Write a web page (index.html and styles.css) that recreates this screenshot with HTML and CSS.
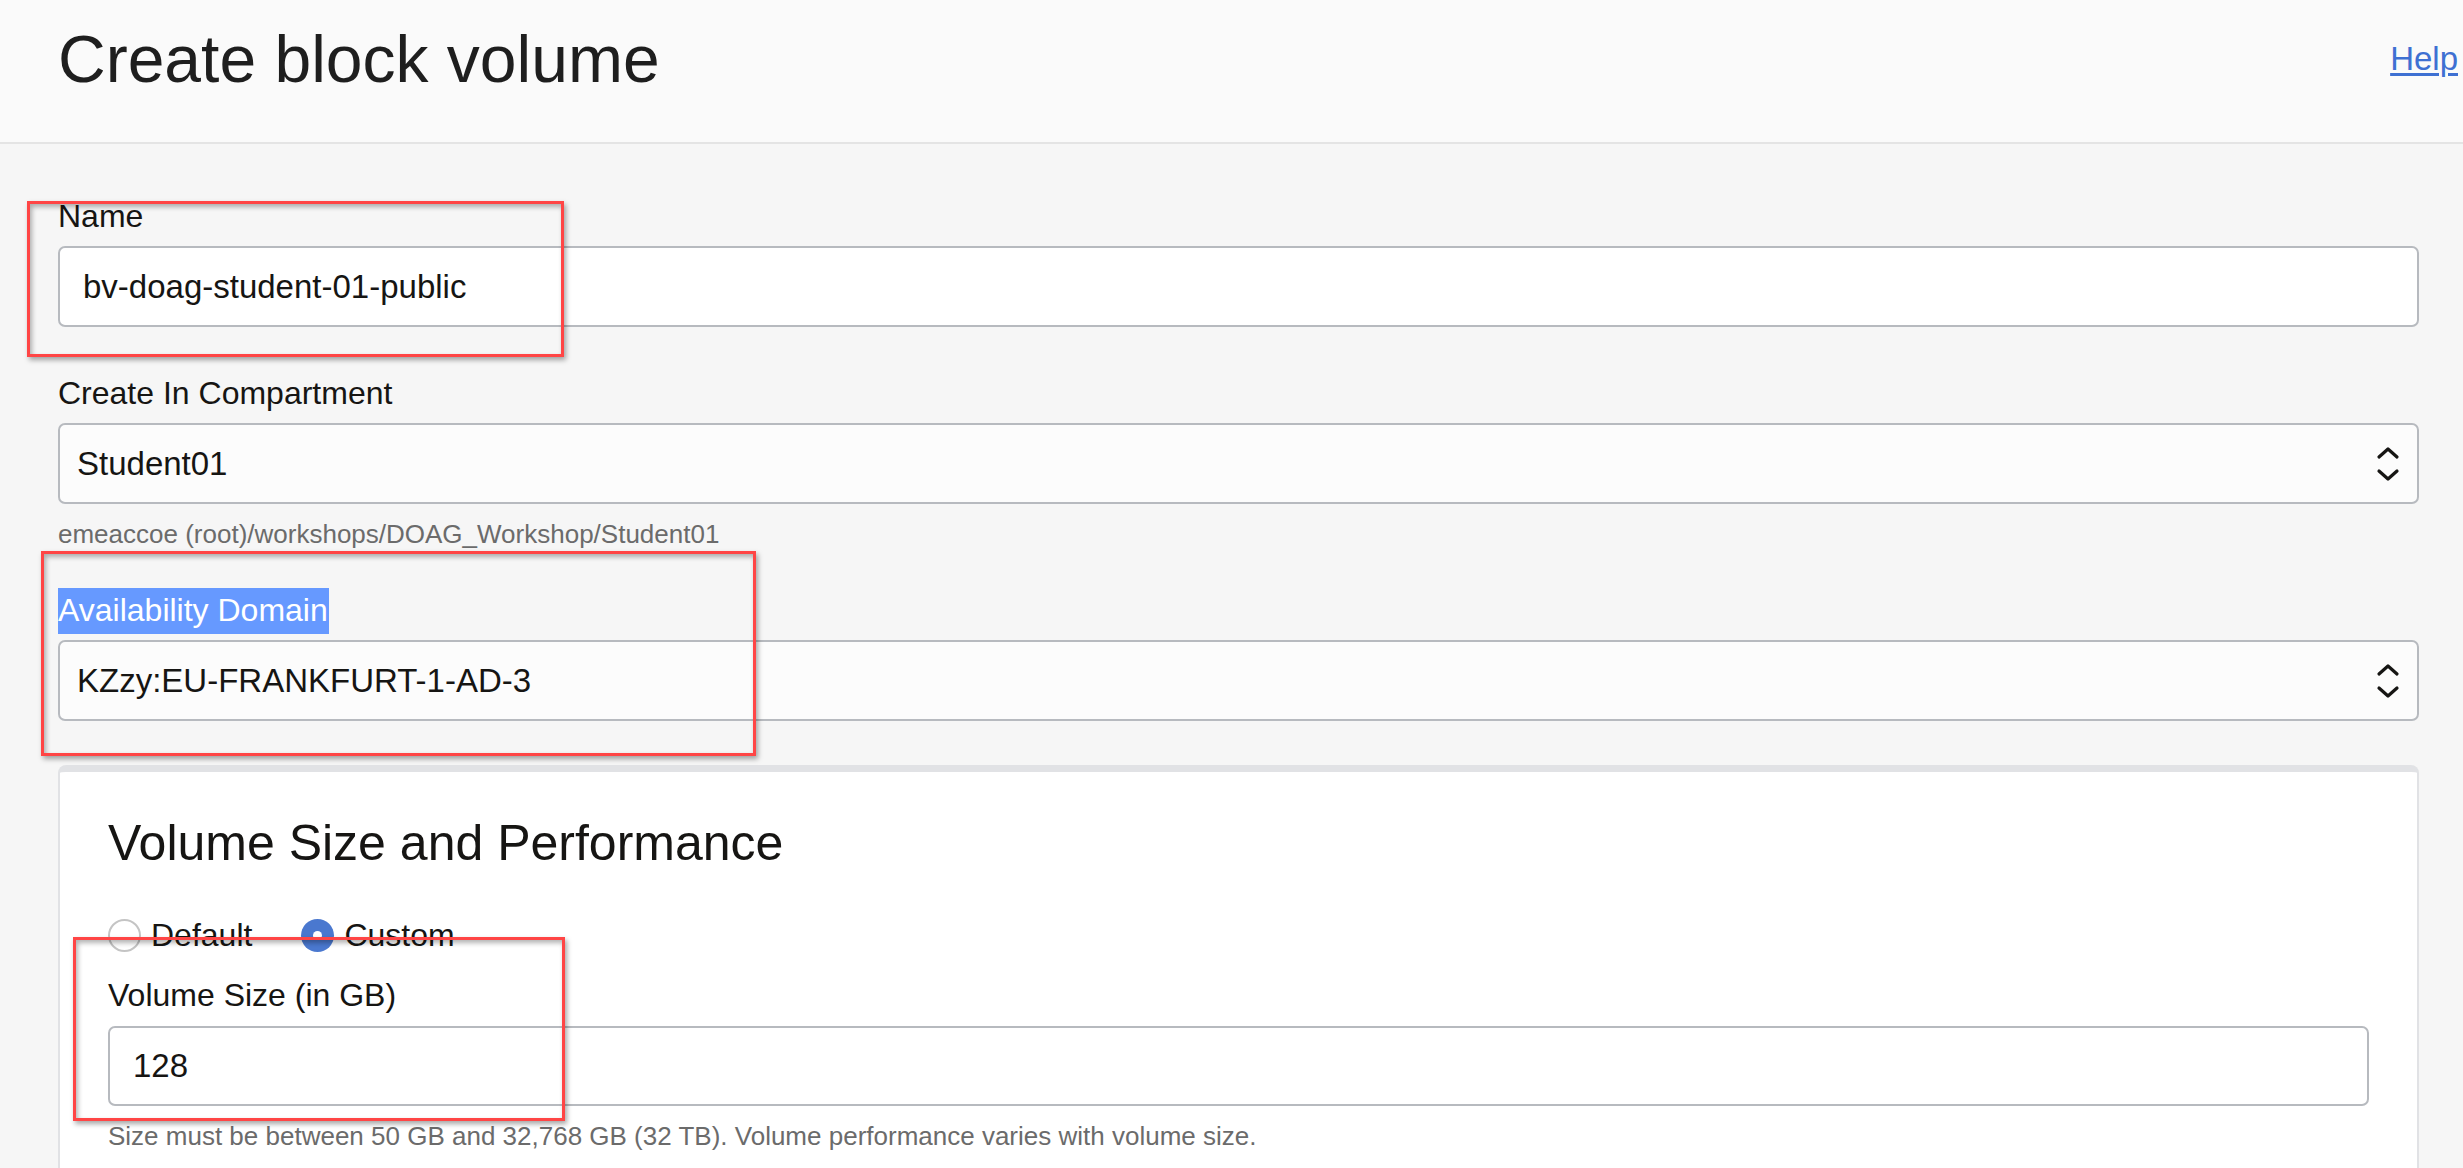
FILE: index.html
```html
<!DOCTYPE html>
<html lang="en">
<head>
<meta charset="utf-8">
<title>Create block volume</title>
<link rel="stylesheet" href="styles.css">
</head>
<body>
<header class="page-header">
  <h1 class="page-title">Create block volume</h1>
  <a class="help-link" href="#">Help</a>
</header>

<main class="form">
  <div class="field">
    <label class="field-label">Name</label>
    <div class="text-input">bv-doag-student-01-public</div>
  </div>

  <div class="field field-compartment">
    <label class="field-label">Create In Compartment</label>
    <div class="select-input">
      <span>Student01</span>
      <svg class="chevrons" width="24" height="38" viewBox="0 0 24 38" aria-hidden="true">
        <polyline points="3,12 12,4 21,12" fill="none" stroke="#161513" stroke-width="3.2" stroke-linecap="round" stroke-linejoin="round"/>
        <polyline points="3,26 12,34 21,26" fill="none" stroke="#161513" stroke-width="3.2" stroke-linecap="round" stroke-linejoin="round"/>
      </svg>
    </div>
    <div class="help-text">emeaccoe (root)/workshops/DOAG_Workshop/Student01</div>
  </div>

  <div class="field field-ad">
    <label class="field-label"><span class="selected">Availability Domain</span></label>
    <div class="select-input">
      <span>KZzy:EU-FRANKFURT-1-AD-3</span>
      <svg class="chevrons" width="24" height="38" viewBox="0 0 24 38" aria-hidden="true">
        <polyline points="3,12 12,4 21,12" fill="none" stroke="#161513" stroke-width="3.2" stroke-linecap="round" stroke-linejoin="round"/>
        <polyline points="3,26 12,34 21,26" fill="none" stroke="#161513" stroke-width="3.2" stroke-linecap="round" stroke-linejoin="round"/>
      </svg>
    </div>
  </div>

  <section class="card">
    <h2 class="card-title">Volume Size and Performance</h2>
    <div class="radio-row">
      <label class="radio"><span class="radio-dot"></span>Default</label>
      <label class="radio"><span class="radio-dot checked"></span>Custom</label>
    </div>
    <div class="field field-size">
      <label class="field-label">Volume Size (in GB)</label>
      <div class="text-input">128</div>
      <div class="help-text">Size must be between 50 GB and 32,768 GB (32 TB). Volume performance varies with volume size.</div>
    </div>
  </section>
</main>

<div class="annot annot-1"></div>
<div class="annot annot-2"></div>
<div class="annot annot-3"></div>
</body>
</html>
```

FILE: styles.css
```css
html, body {
  margin: 0;
  padding: 0;
}

body {
  background: #f6f6f6;
  font-family: "Liberation Sans", Arial, Helvetica, sans-serif;
  color: #161513;
  overflow: hidden;
  height: 1168px;
}

.page-header {
  box-sizing: border-box;
  height: 144px;
  background: #fafafa;
  border-bottom: 2px solid #e4e4e4;
  display: flex;
  justify-content: space-between;
  align-items: flex-start;
  padding: 26px 5px 0 58px;
}

.page-title {
  margin: 0;
  font-size: 66px;
  line-height: 66px;
  font-weight: normal;
  color: #1e1e1e;
}

.help-link {
  margin-top: 16px;
  font-size: 33px;
  line-height: 33px;
  color: #3e70d2;
  text-decoration: underline;
  text-underline-offset: 3px;
}

.form {
  padding: 56px 44px 0 58px;
}

.field-label {
  display: block;
  font-size: 32px;
  line-height: 32px;
  height: 32px;
  margin-bottom: 14px;
  color: #161513;
}

.text-input,
.select-input {
  box-sizing: border-box;
  height: 81px;
  border: 2px solid #b7babf;
  border-radius: 7px;
  background: #ffffff;
  font-size: 33px;
  display: flex;
  align-items: center;
  padding-left: 23px;
  color: #161513;
}

.select-input {
  background: #fcfcfc;
  padding-left: 17px;
  padding-right: 17px;
  justify-content: space-between;
}

.chevrons {
  display: block;
}

.field-compartment {
  margin-top: 50px;
}

.help-text {
  font-size: 26px;
  line-height: 26px;
  color: #6b6b6b;
  margin-top: 17px;
}

.field-ad {
  margin-top: 47px;
}

.selected {
  background: #6699ff;
  color: #ffffff;
  padding: 4px 1px 6px 0;
}

.card {
  margin-top: 44px;
  background: #ffffff;
  border-top: 7px solid #e1e2e5;
  border-left: 2px solid #e1e2e5;
  border-right: 2px solid #e1e2e5;
  border-radius: 8px 8px 0 0;
  padding: 46px 48px 60px 48px;
}

.card-title {
  margin: 0;
  font-size: 50px;
  line-height: 50px;
  font-weight: normal;
  color: #161513;
}

.radio-row {
  margin-top: 50px;
  display: flex;
  align-items: center;
  gap: 49px;
  height: 34px;
}

.radio {
  display: flex;
  align-items: center;
  gap: 10px;
  font-size: 32px;
  line-height: 32px;
  color: #161513;
}

.radio-dot {
  box-sizing: border-box;
  width: 33px;
  height: 33px;
  border-radius: 50%;
  border: 2px solid #c4c4c4;
  background: #ffffff;
  position: relative;
}

.radio-dot.checked {
  border: none;
  background: #4a78cf;
}

.radio-dot.checked::after {
  content: "";
  position: absolute;
  left: 12px;
  top: 12px;
  width: 9px;
  height: 9px;
  border-radius: 50%;
  background: #ffffff;
}

.field-size {
  margin-top: 27px;
}

.field-size .field-label {
  margin-bottom: 15px;
}

.field-size .text-input {
  height: 80px;
}

/* annotation overlays (red highlight boxes drawn over the screenshot) */
.annot {
  position: absolute;
  box-sizing: border-box;
  border: 3px solid #ff4545;
  box-shadow: 2px 3px 5px rgba(0, 0, 0, 0.35), inset 2px 3px 5px rgba(0, 0, 0, 0.3);
  pointer-events: none;
}

.annot-1 {
  left: 27px;
  top: 201px;
  width: 537px;
  height: 156px;
}

.annot-2 {
  left: 41px;
  top: 551px;
  width: 715px;
  height: 205px;
}

.annot-3 {
  left: 73px;
  top: 937px;
  width: 492px;
  height: 184px;
}
```
